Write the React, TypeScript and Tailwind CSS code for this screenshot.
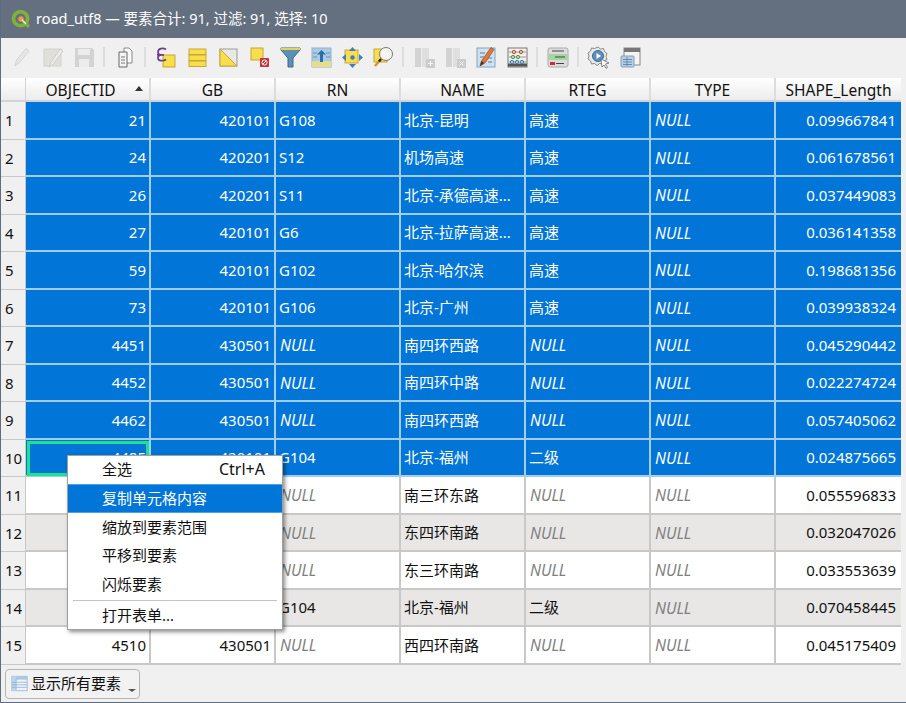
import React from "react";

const FONT = "font-['Noto_Sans','Noto_Sans_CJK_SC',sans-serif]";

type Row = { id: string; gb: string; rn: string; name: string; rteg: string; len: string };
const rows: Row[] = [
  { id: "21", gb: "420101", rn: "G108", name: "北京-昆明", rteg: "高速", len: "0.099667841" },
  { id: "24", gb: "420201", rn: "S12", name: "机场高速", rteg: "高速", len: "0.061678561" },
  { id: "26", gb: "420201", rn: "S11", name: "北京-承德高速...", rteg: "高速", len: "0.037449083" },
  { id: "27", gb: "420101", rn: "G6", name: "北京-拉萨高速...", rteg: "高速", len: "0.036141358" },
  { id: "59", gb: "420101", rn: "G102", name: "北京-哈尔滨", rteg: "高速", len: "0.198681356" },
  { id: "73", gb: "420101", rn: "G106", name: "北京-广州", rteg: "高速", len: "0.039938324" },
  { id: "4451", gb: "430501", rn: "", name: "南四环西路", rteg: "", len: "0.045290442" },
  { id: "4452", gb: "430501", rn: "", name: "南四环中路", rteg: "", len: "0.022274724" },
  { id: "4462", gb: "430501", rn: "", name: "南四环西路", rteg: "", len: "0.057405062" },
  { id: "4485", gb: "420101", rn: "G104", name: "北京-福州", rteg: "二级", len: "0.024875665" },
  { id: "", gb: "", rn: "", name: "南三环东路", rteg: "", len: "0.055596833" },
  { id: "", gb: "", rn: "", name: "东四环南路", rteg: "", len: "0.032047026" },
  { id: "", gb: "", rn: "", name: "东三环南路", rteg: "", len: "0.033553639" },
  { id: "", gb: "", rn: "G104", name: "北京-福州", rteg: "二级", len: "0.070458445" },
  { id: "4510", gb: "430501", rn: "", name: "西四环南路", rteg: "", len: "0.045175409" },
];

const headers = ["OBJECTID", "GB", "RN", "NAME", "RTEG", "TYPE", "SHAPE_Length"];

const Svg = ({ children, op }: { children: React.ReactNode; op?: boolean }) => (
  <svg viewBox="0 0 24 24" className={op ? "w-6 h-6 opacity-40" : "w-6 h-6"}>
    {children}
  </svg>
);

const Y = "#f6de50";
const YS = "#c9a82a";

const icons: React.ReactNode[] = [
  <Svg op key="a">
    <path d="M5 21l1.500-6L16 3.500l3 2.500-9.500 11.500z" fill="#d8d8d8" stroke="#a8a8a8" />
  </Svg>,
  <Svg op key="b">
    <rect x="3" y="4" width="17" height="17" fill="#c9c9b8" stroke="#a8a8a0" />
    <path d="M8 22l2-5 9-13 3 2-9.500 13z" fill="#e6e6e6" stroke="#9a9a9a" />
  </Svg>,
  <Svg op key="c">
    <path d="M3 3h17l2 2v17H3z" fill="#a8a8a8" />
    <rect x="6" y="4" width="12" height="6" fill="#e8e8e8" />
    <rect x="7" y="14" width="10" height="8" fill="#e8e8e8" />
  </Svg>,
  <Svg key="d">
    <path d="M11 3h5l3 3v12h-8z" fill="#fafafa" stroke="#888" />
    <path d="M6 7h8v15H6z" fill="#f4f4f4" stroke="#666" />
    <path d="M8 12h4M8 15h4M8 18h4" stroke="#777" />
  </Svg>,
  <Svg key="e">
    <rect x="9" y="10" width="12" height="12" fill={Y} stroke={YS} />
    <path d="M12 4.500C9 2.500 4 3.500 4 7c0 2 2 3 4 3-3 0-4.500 1.500-4 3.500.5 2.500 5 3 8 1M3 9.800h7" fill="none" stroke="#6a3f8c" strokeWidth="1.700" />
  </Svg>,
  <Svg key="f">
    <rect x="4" y="4" width="17" height="5.500" fill={Y} stroke={YS} />
    <rect x="4" y="10" width="17" height="5.500" fill={Y} stroke={YS} />
    <rect x="4" y="16" width="17" height="5.500" fill={Y} stroke={YS} />
  </Svg>,
  <Svg key="g">
    <rect x="4" y="4" width="17" height="17" fill="#e8e8e8" stroke="#999" />
    <path d="M4 4v17h17z" fill={Y} stroke={YS} />
  </Svg>,
  <Svg key="h">
    <rect x="4" y="3" width="12" height="12" fill={Y} stroke={YS} />
    <rect x="13" y="13" width="9" height="9" rx="1" fill="#c5303a" />
    <circle cx="17.500" cy="17.500" r="2.600" fill="none" stroke="#fff" />
    <path d="M15.800 19.200l3.400-3.400" stroke="#fff" />
  </Svg>,
  <Svg key="i">
    <path d="M3 3h19v2l-7 8v9h-5v-9L3 5z" fill="#5b8fb5" stroke="#3d6a8c" />
    <path d="M3 3h19v2H3z" fill="#e8d454" />
  </Svg>,
  <Svg key="j">
    <rect x="3" y="3" width="19" height="19" fill="#a9cbe6" stroke="#8fb2cc" />
    <path d="M3 16h19v6H3z" fill="#e5dc8c" />
    <path d="M12.500 5l4.500 4.500h-3V17h-3V9.500H8z" fill="#2a6fa8" />
    <path d="M4 8h4M4 12h4M17 12h4M17 8h4" stroke="#6d94b3" />
  </Svg>,
  <Svg key="k">
    <rect x="5" y="5" width="13" height="13" fill={Y} stroke={YS} />
    <path d="M12.500 2l3.500 4h-7zM12.500 23l-3.500-4h7zM2 12.500L6 9v7zM23 12.500L19 16V9z" fill="#3f7eb8" />
    <circle cx="12.500" cy="12.500" r="2.200" fill="#3f7eb8" />
  </Svg>,
  <Svg key="l">
    <rect x="3" y="4" width="13" height="13" fill={Y} stroke={YS} />
    <circle cx="15" cy="9" r="6.500" fill="#f4f4f0" stroke="#777" />
    <path d="M10 14l-6 7" stroke="#c9962e" strokeWidth="2.400" />
    <path d="M10 14l-2 2.400" stroke="#222" strokeWidth="2.400" />
  </Svg>,
  <Svg op key="m">
    <rect x="3" y="3" width="6" height="19" fill="#aaa" />
    <rect x="10" y="3" width="7" height="19" fill="#c8c8c8" />
    <rect x="14" y="14" width="9" height="9" fill="#999" />
    <path d="M18.500 16v5M16 18.500h5" stroke="#fff" />
  </Svg>,
  <Svg op key="n">
    <rect x="3" y="3" width="6" height="19" fill="#aaa" />
    <rect x="10" y="3" width="7" height="19" fill="#c8c8c8" />
    <rect x="14" y="14" width="9" height="9" fill="#999" />
    <path d="M16.500 16.500l4 4M20.500 16.500l-4 4" stroke="#fff" />
  </Svg>,
  <Svg key="o">
    <rect x="3" y="3" width="18" height="19" fill="#cfe1f1" stroke="#7fa6c6" />
    <path d="M6 8h5M6 12h4M14 17h4M14 13h4" stroke="#4f7da3" />
    <path d="M6 21l1.500-5L17 2.500l3 2L11 18z" fill="#e8772e" stroke="#8a4a1c" strokeWidth=".7" />
    <path d="M6 21l1.500-5 2.500 2z" fill="#333" />
  </Svg>,
  <Svg key="p">
    <rect x="3" y="3" width="19" height="19" fill="#f2f2e8" stroke="#777" />
    <path d="M3 20h19" stroke="#555" strokeWidth="3" />
    <path d="M4 7h17M4 12h17M4 17h17" stroke="#999" />
    <circle cx="9" cy="7" r="1.700" fill="none" stroke="#c4463a" />
    <circle cx="16" cy="7" r="1.700" fill="none" stroke="#c4463a" />
    <circle cx="8" cy="12" r="1.700" fill="none" stroke="#4e9e4e" />
    <circle cx="13" cy="12" r="1.700" fill="none" stroke="#4e9e4e" />
    <circle cx="7" cy="17" r="1.700" fill="none" stroke="#3f7eb8" />
    <circle cx="12" cy="17" r="1.700" fill="none" stroke="#3f7eb8" />
    <circle cx="17" cy="17" r="1.700" fill="none" stroke="#3f7eb8" />
  </Svg>,
  <Svg key="q">
    <rect x="2" y="3" width="20" height="19" rx="2" fill="#dcdcdc" stroke="#aaa" />
    <rect x="3" y="9" width="18" height="6" fill="#a5d6a0" />
    <path d="M6 6h12M9 12h10" stroke="#444" />
    <rect x="4" y="17" width="5" height="3" fill="#c5303a" />
    <path d="M10 18.500h8" stroke="#444" />
  </Svg>,
  <Svg key="r">
    <path d="M11 2l2.500 2 3-.5 1 3 2.500 2-1 3 1 3-3 1.500-1.500 3-3-.5-2.500 2-2.500-2-3 .5-1-3-2.500-2 1-3-1-3 2.500-2 1-3 3 .5z" fill="#e8e8e8" stroke="#888" />
    <circle cx="11" cy="11" r="5.500" fill="#5b8fc4" stroke="#3d6a8c" />
    <path d="M9.500 8l4.500 3-4.500 3z" fill="#fff" />
    <path d="M14 14l8 4-3.500 1 2 3.500-1.500.8-2-3.300-2 2z" fill="#fff" stroke="#666" strokeWidth=".8" />
  </Svg>,
  <Svg key="s">
    <rect x="6" y="3" width="16" height="17" fill="#f4f4f4" stroke="#888" />
    <rect x="6" y="3" width="16" height="4" fill="#777" />
    <rect x="3" y="11" width="13" height="11" rx="1" fill="#b8d0e6" stroke="#7f9fbc" />
    <path d="M5 14.500h9M5 17h9M5 19.500h9M9 12v9" stroke="#5f86a8" strokeWidth=".9" />
  </Svg>,
];

const Sep = () => (
  <div className="w-[10px] h-full flex items-center justify-center">
    <div className="w-[2px] h-[20px] bg-[#dddddd]" />
  </div>
);

const Icon = ({ i }: { i: number }) => (
  <div className="w-[31px] h-full flex items-center justify-center">{icons[i]}</div>
);

const Null = ({ sel }: { sel: boolean }) => (
  <span className={sel ? "italic text-white text-[15.500px] ml-[1px] mt-[2px]" : "italic text-[#808080] text-[15.500px] ml-[1px] mt-[2px]"}>NULL</span>
);

const Logo = () => (
  <svg viewBox="0 0 24 24" className="w-[20px] h-[20px]">
    <circle cx="11.500" cy="11.500" r="8.500" fill="none" stroke="#7fb03a" strokeWidth="4.500" />
    <path d="M15 15l6.500 6.500" stroke="#7fb03a" strokeWidth="4" />
    <circle cx="12" cy="12" r="3.300" fill="#ef9a3c" />
    <path d="M13 13l5 5" stroke="#f6f0dc" strokeWidth="1.600" />
  </svg>
);

const TableIcon = () => (
  <svg viewBox="0 0 20 20" className="w-[17px] h-[17px]">
    <rect x="1" y="1.500" width="18" height="17" fill="#eef4fa" stroke="#93b5d6" />
    <rect x="1" y="1.500" width="18" height="4" fill="#a9c8e6" />
    <rect x="1" y="1.500" width="5" height="17" fill="#bcd4ec" />
    <path d="M1 8.500h18M1 11.500h18M1 14.500h18M6 5v13" stroke="#93b5d6" />
  </svg>
);

export default function App() {
  return (
    <div className={`${FONT} relative w-[906px] h-[703px] overflow-hidden flex flex-col bg-[#f0f0f0] text-[15px] text-[#111111] border-l border-b border-[#5f6d7e]`}>
      <div className="h-[38px] shrink-0 -ml-px bg-[#646f80] flex items-center pl-[11px] gap-[5px] text-white text-[14.500px]">
        <Logo />
        <span>road_utf8 — 要素合计: 91, 过滤: 91, 选择: 10</span>
      </div>

      <div className="h-[40px] shrink-0 flex items-center pl-[5px] pb-[2px]">
        {[0, 1, 2].map((i) => <Icon key={i} i={i} />)}
        <Sep />
        <Icon i={3} />
        <Sep />
        {[4, 5, 6, 7, 8, 9, 10, 11].map((i) => <Icon key={i} i={i} />)}
        <Sep />
        {[12, 13, 14, 15].map((i) => <Icon key={i} i={i} />)}
        <Sep />
        <Icon i={16} />
        <Sep />
        {[17, 18].map((i) => <Icon key={i} i={i} />)}
      </div>

      <div className="w-[900px] flex flex-col">
        <div className="h-[24px] flex bg-gradient-to-b from-[#ffffff] to-[#ececec] border-b-2 border-[#d0d4d8] text-[15.500px]">
          <div className="w-[25px] border-r border-[#d4d4d4]" />
          {headers.map((h, i) => (
            <div key={h} className={`relative w-[125px] flex items-center justify-center border-r-2 border-[#dcdcdc] leading-none pt-[4px] last:border-r-0 ${i === 0 ? "pr-[14px]" : ""}`}>
              {h}
              {i === 0 && (
                <span className="absolute right-[6px] top-[8px] w-0 h-0 border-x-[4px] border-x-transparent border-b-[5px] border-b-[#333333]" />
              )}
            </div>
          ))}
        </div>

        {rows.map((r, idx) => {
          const sel = idx < 10;
          const alt = idx === 11 || idx === 13;
          const rowCls = sel
            ? "bg-[#0275d8] text-white border-[#a3cdee]"
            : alt
              ? "bg-[#e8e7e5] border-[#c8c8c8]"
              : "bg-white border-[#c8c8c8]";
          const cell = `w-[125px] h-full flex items-center border-r-2 ${sel ? "border-[#a3cdee]" : "border-[#c8c8c8]"} px-[3px] whitespace-nowrap last:border-r-0 last:pr-[5px]`;
          return (
            <div key={idx} className="h-[37.500px] flex">
              <div className="w-[25px] h-full flex items-center pl-[4px] bg-[#f0f0f0] border-r border-b border-[#c8c8c8] text-[#111111]">
                {idx + 1}
              </div>
              <div className={`flex flex-1 h-full border-b-2 ${rowCls}`}>
                <div className={`${cell} justify-end relative`}>
                  {r.id}
                  {idx === 9 && <span className="absolute left-[1px] right-0 top-[1px] -bottom-[1px] border-[3px] border-[#20e090]" />}
                </div>
                <div className={`${cell} justify-end`}>{r.gb}</div>
                <div className={cell}>{r.rn || (idx >= 6 || idx === 10 ? <Null sel={sel} /> : "")}</div>
                <div className={cell}>{r.name}</div>
                <div className={cell}>{r.rteg || <Null sel={sel} />}</div>
                <div className={cell}><Null sel={sel} /></div>
                <div className={`${cell} justify-end`}>{r.len}</div>
              </div>
            </div>
          );
        })}
      </div>

      <div className="flex-1 flex items-start pt-[4px] pl-[4px]">
        <div className="w-[135px] h-[30px] rounded-[4px] border border-[#b4b4b4] bg-[#f2f2f2] flex items-center pl-[5px] gap-[3px] relative">
          <TableIcon />
          <span>显示所有要素</span>
          <span className="absolute right-[3px] bottom-[6px] w-0 h-0 border-x-[4px] border-x-transparent border-t-[3px] border-t-[#555555]" />
        </div>
      </div>

      <div className="absolute left-[66px] top-[455px] w-[216px] h-[175px] bg-white border border-[#a0a0a0] shadow-[2px_2px_4px_rgba(0,0,0,0.45)] flex flex-col text-[15px] leading-none text-[#111111]">
        <div className="h-[28px] flex items-center justify-between pl-[34px] pr-[17px] pb-[2px]">
          <span>全选</span>
          <span className="text-[16px]">Ctrl+A</span>
        </div>
        <div className="h-[29px] flex items-center pl-[34px] bg-[#0275d8] text-white border-y border-[#4aa3e8]">复制单元格内容</div>
        <div className="h-[29px] flex items-center pl-[34px]">缩放到要素范围</div>
        <div className="h-[28px] flex items-center pl-[34px] pb-[1px]">平移到要素</div>
        <div className="h-[29px] flex items-center pl-[34px] pb-[1px]">闪烁要素</div>
        <div className="h-px mx-[5px] my-[1px] bg-[#c4c4c4]" />
        <div className="flex-1 flex items-center pl-[34px]">打开表单...</div>
      </div>
    </div>
  );
}
